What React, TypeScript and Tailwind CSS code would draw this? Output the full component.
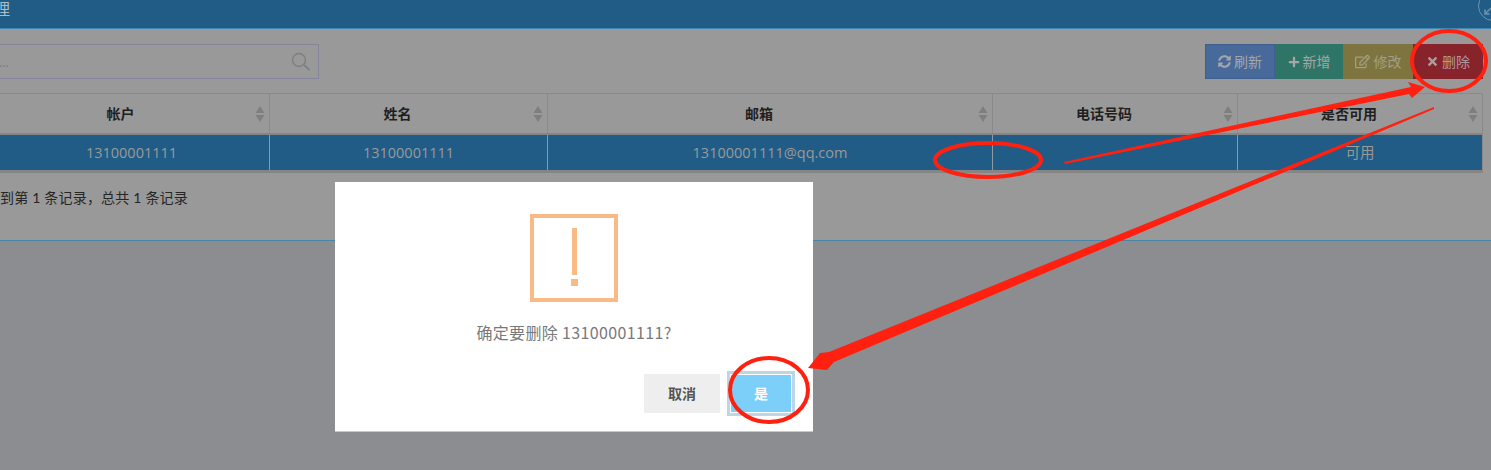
import { FaSyncAlt, FaPlus, FaRegEdit, FaTimes } from "react-icons/fa";

const cjk = "font-['Lato','Noto_Sans_CJK_SC',sans-serif]";

function Sort() {
  return (
    <svg width="10" height="16" viewBox="0 0 10 16" className="absolute right-[4px] top-[12px]">
      <path d="M5 0L9.5 7H0.5Z M0.5 9H9.5L5 16Z" fill="#7f7f7f" />
    </svg>
  );
}

const cols = [
  { t: "帐户", v: "13100001111", w: "w-[276px]" },
  { t: "姓名", v: "13100001111", w: "w-[278px]" },
  { t: "邮箱", v: "13100001111@qq.com", w: "w-[445px]" },
  { t: "电话号码", v: "", w: "w-[245px]" },
  { t: "是否可用", v: "可用", w: "w-[244px]" },
];

export default function App() {
  return (
    <div className={`relative w-[1491px] h-[470px] overflow-hidden bg-[#8c8d91] ${cjk}`}>
      <div className="h-[29px] bg-[#205c85] border-b border-[#3f87b5] relative overflow-hidden">
        <span className="block -ml-[6px] text-[16px] leading-[17px] text-[#a9bccb]">理</span>
        <div className="absolute left-[1478px] -top-[9px] w-[30px] h-[30px] rounded-full border border-[#6f93ad]" />
        <svg width="8" height="8" viewBox="0 0 8 8" className="absolute left-[1484px] top-[7px]" fill="none" stroke="#6f93ad" strokeWidth="1.5">
          <path d="M7 1L2 6M1 2.5V7H5.5" />
        </svg>
      </div>
      <div className="h-[212px] bg-[#999999] border-b border-[#4785ab]">
        <div className="flex justify-between items-start pt-[15px]">
          <div className="relative w-[319px] h-[35px] border border-[#84849a] border-l-0 flex items-center">
            <span className="ml-[-1px] text-[14px] text-[#7f7f7f] leading-none">...</span>
            <svg width="20" height="20" viewBox="0 0 20 20" className="absolute right-[7px] top-[7px]" fill="none" stroke="#7f7f7f" strokeWidth="1.4">
              <circle cx="8" cy="8" r="6.5" />
              <path d="M13 13L18.5 18" strokeWidth="1.8" />
            </svg>
          </div>
          <div className="flex h-[35px] text-[14px] leading-none mr-[8px]">
            <button className="w-[70px] flex items-center justify-center gap-[3px] bg-[#476a9a] border border-[#3d5f92] text-[#a6a6a6]">
              <FaSyncAlt className="text-[13px]" />刷新
            </button>
            <button className="w-[68px] flex items-center justify-center gap-[3px] bg-[#2e7567] text-[#a6a6a6]">
              <FaPlus className="text-[12px]" />新增
            </button>
            <button className="w-[70px] flex items-center justify-center gap-[4px] bg-[#7d7440] text-[#a39f83]">
              <FaRegEdit className="text-[15px]" />修改
            </button>
            <button className="w-[70px] flex items-center justify-center gap-[3px] bg-[#87232b] text-[#b09a9c]">
              <FaTimes className="text-[13px]" />删除
            </button>
          </div>
        </div>
        <div className="mt-[14px] -ml-[7px] w-[1490px] border border-[#8a8a8a] border-b-[3px] border-b-[#858585]">
          <div className="flex h-[41px] border-b-2 border-[#858585]">
            {cols.map((c, i) => (
              <div key={c.t} className={`relative shrink-0 ${c.w} ${i < 4 ? "border-r border-[#8a8a8a]" : ""} flex items-center justify-center pr-[22px] text-[14px] font-bold text-[#1f1f1f]`}>
                {c.t}
                <Sort />
              </div>
            ))}
          </div>
          <div className="flex h-[35px] bg-[#205c85]">
            {cols.map((c, i) => (
              <div key={c.t} className={`shrink-0 ${c.w} ${i < 4 ? "border-r border-[#8e9aa3]" : ""} flex items-center justify-center text-[14.5px] text-[#9a9a9a] font-['Open_Sans','Noto_Sans_CJK_SC',sans-serif]`}>
                {c.v}
              </div>
            ))}
          </div>
        </div>
        <div className="mt-[15px] text-[14px] leading-[20px] tracking-[0.2px] text-[#262626] whitespace-nowrap">到第 1 条记录，总共 1 条记录</div>
      </div>

      <div className="absolute left-[335px] top-[182px] w-[478px] h-[250px] bg-white flex flex-col items-center border-b border-[#c8c8c8]">
        <div className="mt-[32px] w-[88px] h-[88px] border-[4px] border-[#f8bb86] flex flex-col items-center">
          <div className="mt-[10px] w-[5px] h-[47px] bg-[#f8bb86]" />
          <div className="mt-[4px] w-[7px] h-[7px] bg-[#f8bb86]" />
        </div>
        <p className="mt-[18px] text-[16px] leading-[24px] tracking-[0.35px] text-[#797979] font-['Noto_Sans_CJK_SC',sans-serif]">确定要删除 13100001111?</p>
        <div className="self-end mt-[27px] mr-[18px] flex gap-[7px] items-start">
          <button className="mt-[3px] w-[76px] h-[39px] bg-[#eeeeee] text-[#555555] text-[14px] font-bold">取消</button>
          <button className="w-[68px] h-[45px] bg-[#7ccff8] border-[3px] border-[#bcd6e8] shadow-[inset_0_0_0_1px_white] text-white text-[14px] font-bold">是</button>
        </div>
      </div>

      <svg width="1491" height="470" className="absolute left-0 top-0 pointer-events-none" fill="none" stroke="#ff2010">
        <ellipse cx="1449" cy="61" rx="37" ry="30" strokeWidth="4" />
        <ellipse cx="988" cy="160" rx="53" ry="17" strokeWidth="4" />
        <ellipse cx="769" cy="390" rx="39" ry="32" strokeWidth="4" />
        <path d="M1064 162L1411 87L1408 82L1425 87L1412 98L1409 94L1065 164Z" fill="#ff2010" stroke="none" />
        <path d="M1434 107L829 352L820 353L808 368L827 370L834 362L1434 109Z" fill="#ff2010" stroke="none" />
      </svg>
    </div>
  );
}
